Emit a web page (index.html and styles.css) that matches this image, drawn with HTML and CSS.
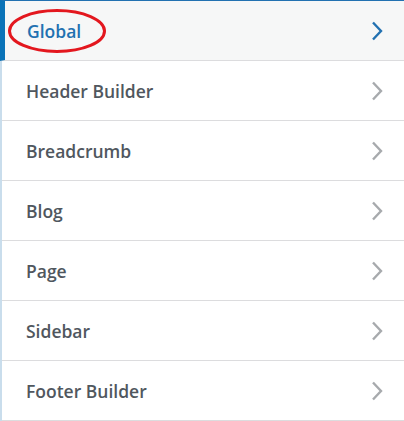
FILE: index.html
```html
<!DOCTYPE html>
<html>
<head>
<meta charset="utf-8">
<link rel="stylesheet" href="styles.css">
</head>
<body>
<ul class="panel">
  <li class="item active">
    <span class="label">Global</span>
    <svg class="chev" width="12" height="20" viewBox="0 0 12 20"><path d="M2 1.5 L10 10 L2 18.5" fill="none" stroke="currentColor" stroke-width="2.4"/></svg>
    <svg class="mark" width="100" height="46" viewBox="0 0 100 46"><ellipse cx="50" cy="23" rx="47.5" ry="20.5" fill="none" stroke="#e3171e" stroke-width="3"/></svg>
  </li>
  <li class="item"><span class="label">Header Builder</span><svg class="chev" width="12" height="20" viewBox="0 0 12 20"><path d="M2 1.5 L10 10 L2 18.5" fill="none" stroke="currentColor" stroke-width="2.4"/></svg></li>
  <li class="item"><span class="label">Breadcrumb</span><svg class="chev" width="12" height="20" viewBox="0 0 12 20"><path d="M2 1.5 L10 10 L2 18.5" fill="none" stroke="currentColor" stroke-width="2.4"/></svg></li>
  <li class="item"><span class="label">Blog</span><svg class="chev" width="12" height="20" viewBox="0 0 12 20"><path d="M2 1.5 L10 10 L2 18.5" fill="none" stroke="currentColor" stroke-width="2.4"/></svg></li>
  <li class="item"><span class="label">Page</span><svg class="chev" width="12" height="20" viewBox="0 0 12 20"><path d="M2 1.5 L10 10 L2 18.5" fill="none" stroke="currentColor" stroke-width="2.4"/></svg></li>
  <li class="item"><span class="label">Sidebar</span><svg class="chev" width="12" height="20" viewBox="0 0 12 20"><path d="M2 1.5 L10 10 L2 18.5" fill="none" stroke="currentColor" stroke-width="2.4"/></svg></li>
  <li class="item"><span class="label">Footer Builder</span><svg class="chev" width="12" height="20" viewBox="0 0 12 20"><path d="M2 1.5 L10 10 L2 18.5" fill="none" stroke="currentColor" stroke-width="2.4"/></svg></li>
</ul>
</body>
</html>
```
FILE: styles.css
```css
html, body { margin: 0; padding: 0; background: #fff; }
.panel {
  list-style: none;
  margin: 0;
  padding: 0;
  width: 404px;
  border-left: 2px solid #c9ddec;
  box-sizing: border-box;
  font-family: "Open Sans", "Noto Sans", sans-serif;
}
.item {
  position: relative;
  display: flex;
  align-items: center;
  justify-content: space-between;
  height: 59px;
  padding: 0 21px 0 24px;
  border-bottom: 1px solid #dcdcde;
  background: #fff;
  color: #50575e;
  font-size: 17.5px;
  font-weight: 600;
}
.item .chev { color: #a7aaad; }
.item.active {
  margin-left: -2px;
  padding-left: 22px;
  border-left: 5px solid #0a73b8;
  border-top: 1px solid #2271b1;
  background: #f6f7f7;
  color: #2271b1;
}
.item.active .chev { color: #2271b1; }
.mark {
  position: absolute;
  left: 2px;
  top: 7px;
}
```
